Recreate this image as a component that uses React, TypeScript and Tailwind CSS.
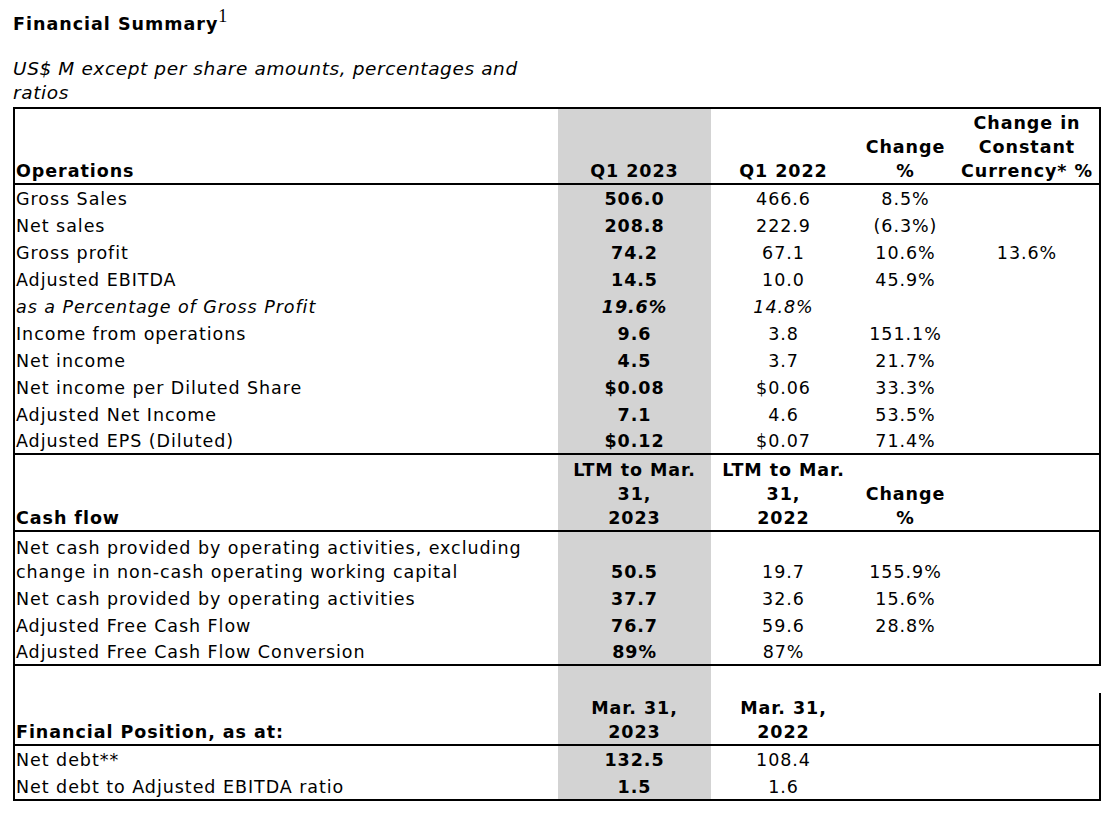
import React from "react";

type Row = {
  label: string;
  cur?: string;
  prev?: string;
  change?: string;
  cc?: string;
  italic?: boolean;
  twoLine?: boolean;
};

const operations: Row[] = [
  { label: "Gross Sales", cur: "506.0", prev: "466.6", change: "8.5%" },
  { label: "Net sales", cur: "208.8", prev: "222.9", change: "(6.3%)" },
  { label: "Gross profit", cur: "74.2", prev: "67.1", change: "10.6%", cc: "13.6%" },
  { label: "Adjusted EBITDA", cur: "14.5", prev: "10.0", change: "45.9%" },
  { label: "as a Percentage of Gross Profit", cur: "19.6%", prev: "14.8%", italic: true },
  { label: "Income from operations", cur: "9.6", prev: "3.8", change: "151.1%" },
  { label: "Net income", cur: "4.5", prev: "3.7", change: "21.7%" },
  { label: "Net income per Diluted Share", cur: "$0.08", prev: "$0.06", change: "33.3%" },
  { label: "Adjusted Net Income", cur: "7.1", prev: "4.6", change: "53.5%" },
  { label: "Adjusted EPS (Diluted)", cur: "$0.12", prev: "$0.07", change: "71.4%" },
];

const cashFlow: Row[] = [
  {
    label: "Net cash provided by operating activities, excluding change in non-cash operating working capital",
    cur: "50.5",
    prev: "19.7",
    change: "155.9%",
    twoLine: true,
  },
  { label: "Net cash provided by operating activities", cur: "37.7", prev: "32.6", change: "15.6%" },
  { label: "Adjusted Free Cash Flow", cur: "76.7", prev: "59.6", change: "28.8%" },
  { label: "Adjusted Free Cash Flow Conversion", cur: "89%", prev: "87%" },
];

const position: Row[] = [
  { label: "Net debt**", cur: "132.5", prev: "108.4" },
  { label: "Net debt to Adjusted EBITDA ratio", cur: "1.5", prev: "1.6" },
];

const gray = "bg-[#d3d3d3]";

function DataRow({ row, last }: { row: Row; last?: boolean }) {
  const it = row.italic ? "italic" : "";
  const bottom = last ? "border-b-2 border-black" : "";
  return (
    <tr className={row.twoLine ? "h-[53px]" : last ? "h-[28px]" : "h-[27px]"}>
      <td className={`border-l-2 border-black pl-[1px] align-bottom ${it} ${bottom}`}>
        {row.twoLine ? (
          <>
            Net cash provided by operating activities, excluding
            <br />
            change in non-cash operating working capital
          </>
        ) : (
          row.label
        )}
      </td>
      <td className={`${gray} text-center font-bold align-bottom ${it} ${bottom}`}>{row.cur}</td>
      <td className={`text-center align-bottom ${it} ${bottom}`}>{row.prev}</td>
      <td className={`text-center align-bottom ${bottom}`}>{row.change}</td>
      <td className={`border-r-2 border-black text-center align-bottom ${bottom}`}>{row.cc}</td>
    </tr>
  );
}

export default function App() {
  return (
    <div className="min-h-[824px] bg-white pl-[13px] pt-[12px] text-black [font-family:'DejaVu_Sans',Verdana,sans-serif]">
      {/* Title */}
      <div className="text-[17.5px] font-bold leading-[24px] tracking-[1px]">
        Financial Summary
        <sup className="relative -top-[1px] align-super text-[18px] font-normal tracking-normal [font-family:'Liberation_Serif',serif]">
          1
        </sup>
      </div>

      {/* Units note */}
      <div className="mt-[21px] text-[18.5px] italic leading-[24px] tracking-[0.6px]">
        US$ M except per share amounts, percentages and
        <br />
        ratios
      </div>

      <table className="mt-[2px] table-fixed border-collapse text-[17.5px] leading-[24px] tracking-[0.95px]">
        <colgroup>
          <col className="w-[544px]" />
          <col className="w-[153px]" />
          <col className="w-[145px]" />
          <col className="w-[99px]" />
          <col className="w-[145px]" />
        </colgroup>
        <tbody>
          {/* Operations header */}
          <tr className="h-[76px] border-y-2 border-black font-bold">
            <td className="border-l-2 border-black pl-[1px] align-bottom">Operations</td>
            <td className={`${gray} text-center align-bottom`}>Q1 2023</td>
            <td className="text-center align-bottom">Q1 2022</td>
            <td className="text-center align-bottom">
              Change
              <br />%
            </td>
            <td className="border-r-2 border-black text-center align-bottom">
              Change in
              <br />
              Constant
              <br />
              Currency* %
            </td>
          </tr>
          {operations.map((r) => (
            <DataRow key={r.label} row={r} />
          ))}

          {/* Cash flow header */}
          <tr className="h-[77px] border-y-2 border-black font-bold">
            <td className="border-l-2 border-black pl-[1px] align-bottom">Cash flow</td>
            <td className={`${gray} text-center align-bottom`}>
              LTM to Mar.
              <br />
              31,
              <br />
              2023
            </td>
            <td className="text-center align-bottom">
              LTM to Mar.
              <br />
              31,
              <br />
              2022
            </td>
            <td className="text-center align-bottom">
              Change
              <br />%
            </td>
            <td className="border-r-2 border-black align-bottom" />
          </tr>
          {cashFlow.map((r) => (
            <DataRow key={r.label} row={r} />
          ))}

          {/* spacer row: no right rule */}
          <tr className="h-[28px] border-t-2 border-black">
            <td className="border-l-2 border-black" />
            <td className={gray} />
            <td />
            <td />
            <td />
          </tr>

          {/* Financial position header */}
          <tr className="h-[52px] border-b-2 border-black font-bold">
            <td className="border-l-2 border-black pl-[1px] align-bottom">Financial Position, as at:</td>
            <td className={`${gray} text-center align-bottom`}>
              Mar. 31,
              <br />
              2023
            </td>
            <td className="text-center align-bottom">
              Mar. 31,
              <br />
              2022
            </td>
            <td className="align-bottom" />
            <td className="border-r-2 border-black align-bottom" />
          </tr>
          {position.map((r, i) => (
            <DataRow key={r.label} row={r} last={i === position.length - 1} />
          ))}
        </tbody>
      </table>
    </div>
  );
}
